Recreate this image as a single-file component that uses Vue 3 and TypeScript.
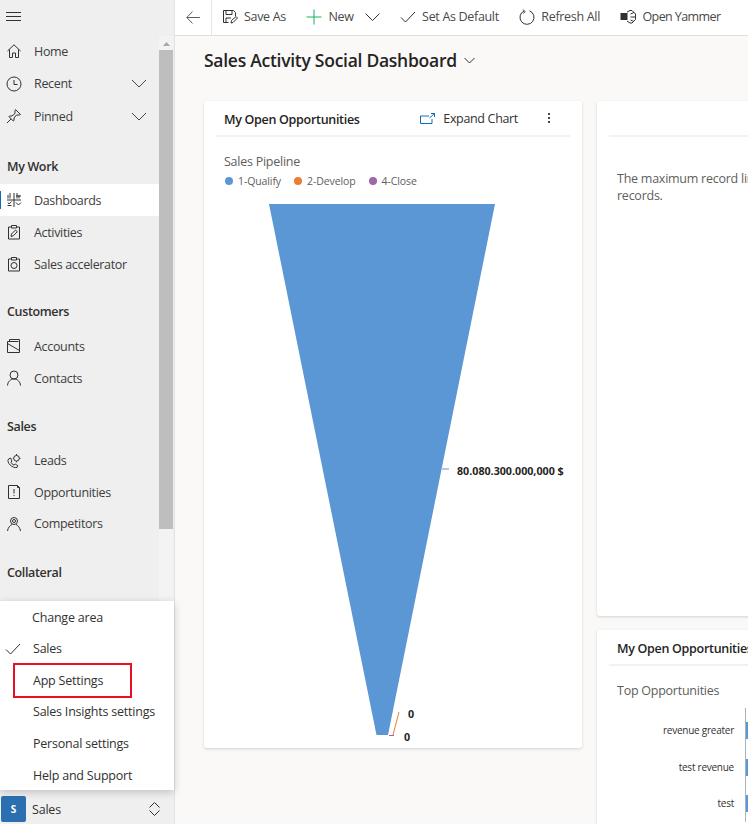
<script setup lang="ts">
interface Item { label: string; icon: string; chevron?: boolean; active?: boolean }
interface Group { title: string; items: Item[] }

const icons: Record<string, string> = {
  home: 'M1.5 8 8 1.8 14.5 8M3.5 6.5V14.5H6.5V10H9.5V14.5H12.5V6.5',
  recent: 'M8 1a7 7 0 1 0 0 14A7 7 0 0 0 8 1ZM8 4V8.5H11.5',
  pin: 'M9.5 1.5 14.5 6.5 13.5 7 10.5 7 8 10 8 12.5 7.3 13 3 8.7 3.5 8 6 8 9 5.5 9 2.5ZM5 11 1 15',
  dash: 'M1 8H15M4 1V6.5M2 3V6.5M8 1V15M11 1V6.5M13 3V6.5M10 4H15M2 10.5 3 12 5.5 9.5M1.5 13.5 5.5 13.5M10 10.5 12.5 13 15 10.5',
  activity: 'M5 3H2.5V15H13.5V3H11M5.5 1.5H10.5V4H5.5ZM5 12.5 5.5 10 9.5 6 11.3 7.7 7.3 11.8Z',
  accel: 'M5 3H2.5V15H13.5V3H11M5.500 1.500H10.500V4H5.500ZM8 6.500A3 3 0 1 0 8 12.500 3 3 0 0 0 8 6.500Z',
  account: 'M1.500 14.500V3.500H12.500M3.500 3.500V1.500H13.500V14.500H1.500M1.500 5.500 13.500 12.500',
  contact: 'M8 1A4 4 0 1 0 8 9 4 4 0 0 0 8 1ZM1.500 15.500C1.800 11.500 4.500 9 8 9S14.200 11.500 14.500 15.500',
  lead: 'M2.500 6 4.500 5 6 8 5 9.200C5.500 10.500 6.500 11.500 8 12L9.200 11 11.800 12.700 11 14.500C6.500 15.500 0 9.500 2.500 6ZM10.500 2.500A2.800 2.800 0 1 0 10.500 8.100 2.800 2.800 0 0 0 10.500 2.500ZM10.500 1V2.500M10.500 8.100V9.300M6.800 5.300H7.700M13.300 5.300H14.500',
  opp: 'M2.500 1.500H11.500L13.500 3.500V14.500H2.500ZM11.500 1.500V3.500H13.500M8 5V9.500M8 11V12',
  competitor: 'M8 1.500A3.500 3.500 0 1 0 8 8.500 3.500 3.500 0 0 0 8 1.500ZM8 3.500A1.500 1.500 0 1 0 8 6.500 1.500 1.500 0 0 0 8 3.500ZM1.500 15C2 11.500 4 9.500 6 8.500M14.500 15C14 11.500 12 9.500 10 8.500',
}

const groups: Group[] = [
  { title: 'My Work', items: [
    { label: 'Dashboards', icon: 'dash', active: true },
    { label: 'Activities', icon: 'activity' },
    { label: 'Sales accelerator', icon: 'accel' },
  ] },
  { title: 'Customers', items: [
    { label: 'Accounts', icon: 'account' },
    { label: 'Contacts', icon: 'contact' },
  ] },
  { title: 'Sales', items: [
    { label: 'Leads', icon: 'lead' },
    { label: 'Opportunities', icon: 'opp' },
    { label: 'Competitors', icon: 'competitor' },
  ] },
]
const topItems: Item[] = [
  { label: 'Home', icon: 'home' },
  { label: 'Recent', icon: 'recent', chevron: true },
  { label: 'Pinned', icon: 'pin', chevron: true },
]
const menu = ['Sales', 'App Settings', 'Sales Insights settings', 'Personal settings', 'Help and Support']
const legend = [
  { label: '1-Qualify', color: '#5b97d5' },
  { label: '2-Develop', color: '#ed7d31' },
  { label: '4-Close', color: '#9e67a5' },
]
const bars = ['revenue greater', 'test revenue', 'test']
</script>

<template>
  <div class="page">
    <aside class="side">
      <div class="side-body">
        <div class="nav">
          <div class="burger"><svg width="15" height="12" viewBox="0 0 15 12"><path d="M0 .5H15M0 4.500H15M0 8.500H15" /></svg></div>
          <div class="top-rows">
            <div v-for="it in topItems" :key="it.label" class="row">
              <svg class="ic" width="16" height="16" viewBox="0 0 16 16"><path :d="icons[it.icon]" /></svg>
              <span class="lbl">{{ it.label }}</span>
              <svg v-if="it.chevron" class="chev" width="16" height="9" viewBox="0 0 16 9"><path d="M1 1 8 8 15 1" /></svg>
            </div>
          </div>
          <section v-for="g in groups" :key="g.title" class="group">
            <h3 class="gt">{{ g.title }}</h3>
            <div v-for="it in g.items" :key="it.label" class="row" :class="{ active: it.active }">
              <svg class="ic" width="16" height="16" viewBox="0 0 16 16"><path :d="icons[it.icon]" /></svg>
              <span class="lbl">{{ it.label }}</span>
            </div>
          </section>
          <section class="group">
            <h3 class="gt">Collateral</h3>
          </section>
        </div>
        <div class="scroll">
          <svg class="arrow" width="7" height="4" viewBox="0 0 7 4"><path class="solid" d="M0 4 3.500 0 7 4Z" /></svg>
          <div class="thumb"></div>
        </div>
      </div>
      <div class="switcher">
        <span class="badge">S</span>
        <span class="sw-label">Sales</span>
        <svg width="11" height="14" viewBox="0 0 11 14" class="updown"><path d="M.5 5.500 5.500 .5 10.500 5.500M.5 8.500 5.500 13.500 10.500 8.500" /></svg>
      </div>
      <div class="menu">
        <div class="menu-head">Change area</div>
        <div v-for="(m, i) in menu" :key="m" class="menu-row">
          <svg v-if="i === 0" class="check" width="16" height="12" viewBox="0 0 16 12"><path d="M1 6.500 5.500 11 15 1" /></svg>
          <span class="menu-text">{{ m }}</span>
        </div>
        <div class="redbox"></div>
      </div>
    </aside>

    <div class="main">
      <header class="bar">
        <div class="back"><svg width="14" height="13" viewBox="0 0 14 13"><path d="M6.500 .5 .8 6.500 6.500 12.500M.8 6.500H14" /></svg></div>
        <div class="tools">
          <div class="tool">
            <svg width="16" height="16" viewBox="0 0 16 16"><path d="M6.500 13.500H1.500V1.500H11.500L13.500 3.500V7M4 1.500V5.500H10V1.500M4 13V9H9M9 14 9.500 11.500 14 7.500 15.500 9 11 13.500Z" /></svg>
            <span>Save As</span>
          </div>
          <div class="tool">
            <svg width="16" height="16" viewBox="0 0 16 16"><path class="green" d="M8 .5V15.500M.5 8H15.500" /></svg>
            <span>New</span>
            <svg class="new-chev" width="15" height="8" viewBox="0 0 15 8"><path d="M.5 .5 7.500 7.500 14.500 .5" /></svg>
          </div>
          <div class="tool">
            <svg width="16" height="12" viewBox="0 0 16 12"><path d="M1 6.500 5.500 11 15 1" /></svg>
            <span>Set As Default</span>
          </div>
          <div class="tool">
            <svg width="16" height="16" viewBox="0 0 16 16"><path d="M10.500 1.800A7 7 0 1 1 5 2M4 .5 6 2.500 4.500 4.500" /></svg>
            <span>Refresh All</span>
          </div>
          <div class="tool">
            <svg width="16" height="14" viewBox="0 0 16 14"><rect x=".5" y="3" width="7" height="7" fill="#323130" stroke="none" /><path d="M7 2 10 .5H12L15.500 4V9.500L12 13H10L7 11M10.500 4 14 2.500M10.500 7H15M10.500 10 14 11.500" /></svg>
            <span>Open Yammer</span>
          </div>
        </div>
      </header>

      <div class="content">
        <div class="title-row">
          <h1>Sales Activity Social Dashboard</h1>
          <svg width="11" height="7" viewBox="0 0 11 7"><path d="M.5 1 5.500 6 10.500 1" /></svg>
        </div>
        <div class="grid">
          <div class="col">
            <article class="card big">
              <div class="card-head">
                <h2>My Open Opportunities</h2>
                <div class="expand">
                  <svg width="15" height="11" viewBox="0 0 15 11"><path d="M9 3H.5V10.500H12V6M9.500 5 14.500 .5M11 .5H14.500V4" /></svg>
                  <span>Expand Chart</span>
                </div>
                <div class="dots"><i></i><i></i><i></i></div>
              </div>
              <div class="chart-title">Sales Pipeline</div>
              <div class="legend">
                <span v-for="l in legend" :key="l.label" class="leg"><i :style="{ background: l.color }"></i>{{ l.label }}</span>
              </div>
              <div class="funnel">
                <svg width="378" height="560" viewBox="204 190 378 560">
                  <polygon points="269,204 495,204 388,735 376.500,735" fill="#5b97d5" />
                  <path class="blue" d="M442 469H449" />
                  <path class="orange" d="M393 735 399 712" />
                  <path class="purple" d="M389 735.500H394" />
                </svg>
                <span class="val v1">80.080.300.000,000 $</span>
                <span class="val v2">0</span>
                <span class="val v3">0</span>
              </div>
            </article>
          </div>
          <div class="col second">
            <article class="card tall">
              <div class="card-head empty"></div>
              <p class="msg">The maximum record limit is exceeded. Reduce the number of records.</p>
            </article>
            <article class="card bottom">
              <div class="card-head"><h2>My Open Opportunities</h2></div>
              <div class="chart-title">Top Opportunities</div>
              <div class="hbars">
                <div v-for="b in bars" :key="b" class="hrow"><span>{{ b }}</span><i></i></div>
              </div>
            </article>
          </div>
        </div>
      </div>
    </div>
  </div>
</template>

<style>
html, body { margin: 0; padding: 0; overflow: hidden; }
</style>

<style scoped>
.page { width: 748px; height: 824px; display: flex; overflow: hidden; font-family: "Open Sans", "Liberation Sans", sans-serif; color: #323130; background: #faf9f8; }
svg { display: block; flex: none; }
svg path { fill: none; stroke: #323130; stroke-width: 1; }

.side { position: relative; width: 174px; flex: none; display: flex; flex-direction: column; background: #efefef; border-right: 1px solid #e3e3e3; }
.side-body { flex: 1; min-height: 0; display: flex; overflow: hidden; }
.nav { width: 159px; flex: none; }
.burger { height: 35px; box-sizing: border-box; padding: 12px 0 0 6px; }
.top-rows .row { height: 32.500px; }
.row { height: 32px; display: flex; align-items: center; padding-left: 6px; padding-right: 12px; position: relative; }
.row.active { background: #fff; }
.row.active::before { content: ""; position: absolute; left: 0; top: 7px; bottom: 7px; width: 1px; background: #0f6cbd; }
.ic { margin-right: 12px; }
.lbl { font-size: 12.500px; letter-spacing: -0.33px; color: #3e3d3c; flex: 1; white-space: nowrap; }
.chev path { stroke: #484644; }
.group { margin-top: 16px; }
.group:nth-of-type(1) { margin-top: 18.500px; }
.group:nth-of-type(3) { margin-top: 17px; }
.group:nth-of-type(3) .row { height: 31.500px; }
.group:nth-of-type(4) { margin-top: 17.500px; }
.gt { margin: 0 0 2px; height: 32px; line-height: 32px; padding-left: 7px; font-size: 12.500px; font-weight: 600; letter-spacing: -0.35px; color: #323130; }
.group:nth-of-type(1) .gt { margin-bottom: 1px; }
.scroll { width: 14px; flex: none; position: relative; margin-top: 36px; display: flex; flex-direction: column; align-items: center; background: #f3f3f3; }
.arrow { margin-top: 6px; }
.arrow .solid { fill: #a6a6a6; stroke: none; }
.thumb { position: absolute; top: 14px; left: 0; width: 14px; height: 479px; background: #bebebe; }

.switcher { height: 34px; flex: none; box-sizing: border-box; display: flex; align-items: center; background: #efefef; padding: 4px 0 0 1px; }
.badge { width: 25px; height: 26px; border-radius: 2px; background: #2b6fb0; color: #fff; font-size: 10px; font-weight: 700; display: flex; align-items: center; justify-content: center; }
.sw-label { margin-left: 6px; font-size: 12.500px; flex: 1; letter-spacing: -0.2px; }
.updown { margin-right: 14px; }

.menu { position: absolute; left: 0; bottom: 34px; width: 174px; height: 189px; box-sizing: border-box; background: #fff; box-shadow: 0 2px 8px rgba(0, 0, 0, .2); }
.menu-head { height: 32px; line-height: 33px; padding-left: 32px; font-size: 12.500px; letter-spacing: -0.2px; color: #323130; }
.menu-row { height: 31.600px; display: flex; align-items: center; position: relative; padding-left: 33px; font-size: 12.500px; letter-spacing: -0.22px; white-space: nowrap; }
.check { position: absolute; left: 5px; top: 10px; }
.redbox { position: absolute; left: 13px; top: 62px; width: 115px; height: 31px; border: 2px solid #e81123; }

.main { flex: 1; min-width: 0; display: flex; flex-direction: column; }
.bar { height: 36px; flex: none; box-sizing: border-box; background: #fff; border-bottom: 1px solid #e1dfdd; display: flex; align-items: center; }
.back { width: 37px; height: 35px; flex: none; box-sizing: border-box; display: flex; align-items: center; justify-content: center; border-right: 1px solid #e6e6e6; }
.back path { stroke: #605e5c; }
.tools { display: flex; align-items: center; gap: 20.500px; padding: 0 0 2px 10px; }
.tool { display: flex; align-items: center; gap: 6px; font-size: 12.500px; letter-spacing: -0.32px; color: #4a4947; white-space: nowrap; }
.tool:last-child { letter-spacing: -0.6px; }
.tool svg path.green { stroke: #1fae5a; }
.new-chev { margin-left: 5px; }

.content { flex: 1; min-height: 0; padding: 0 0 0 29px; overflow: hidden; }
.title-row { height: 48px; display: flex; align-items: center; gap: 7px; }
h1 { margin: 0; font-size: 17.500px; font-weight: 600; letter-spacing: -0.27px; color: #252423; white-space: nowrap; }
.grid { display: flex; gap: 15px; margin-top: 17px; }
.col { width: 378px; flex: none; display: flex; flex-direction: column; gap: 14px; }
.second { width: 160px; }
.card { width: 378px; background: #fff; border-radius: 3px; box-shadow: 0 1px 3px rgba(0, 0, 0, .16); box-sizing: border-box; }
.big { height: 647px; }
.tall { height: 515px; }
.bottom { height: 260px; }
.card-head { height: 36px; box-sizing: border-box; margin: 0 12px; padding: 0 8px; display: flex; align-items: center; border-bottom: 2px solid #f3f2f1; }
h2 { margin: 2px 0 0; font-size: 12.500px; font-weight: 600; color: #252423; flex: 1; white-space: nowrap; letter-spacing: -0.3px; }
.expand { display: flex; align-items: center; gap: 8px; font-size: 12.500px; letter-spacing: -0.33px; color: #323130; margin-right: 30px; white-space: nowrap; }
.expand path { stroke: #0f6cbd; }
.dots { display: flex; flex-direction: column; gap: 2px; margin-right: 12px; }
.dots i { width: 2px; height: 2px; background: #484644; display: block; }
.chart-title { margin: 16px 0 0 20px; font-size: 12.500px; letter-spacing: -0.25px; color: #605e5c; white-space: nowrap; line-height: 17px; }
.legend { display: flex; gap: 13px; margin: 4px 0 0 21px; font-size: 10.500px; color: #605e5c; letter-spacing: -0.1px; }
.leg { display: flex; align-items: center; gap: 5px; white-space: nowrap; }
.leg i { width: 8px; height: 8px; border-radius: 50%; display: block; }
.funnel { position: relative; height: 560px; margin-top: 2px; }
.funnel .blue { stroke: #5b97d5; }
.funnel .orange { stroke: #ed7d31; }
.funnel .purple { stroke: #9e67a5; }
.val { position: absolute; font-size: 10.700px; font-weight: 700; color: #252423; white-space: nowrap; line-height: 14px; }
.v1 { left: 253px; top: 274px; }
.v2 { left: 204px; top: 517px; }
.v3 { left: 200px; top: 540px; }
.msg { margin: 33px 0 0 20px; width: 350px; font-size: 12.500px; letter-spacing: -0.25px; line-height: 17px; color: #605e5c; }
.bottom .chart-title { margin-top: 16px; }
.hbars { margin-top: 13px; position: relative; }
.hbars::after { content: ""; position: absolute; left: 148px; top: -4px; bottom: 0; width: 1px; background: #a6b3c0; }
.hrow { height: 36.500px; display: flex; align-items: center; justify-content: flex-end; width: 148px; position: relative; font-size: 10px; letter-spacing: -0.25px; color: #323130; white-space: nowrap; }
.hrow span { margin-right: 11px; }
.hrow i { position: absolute; left: 149px; top: 10px; width: 4px; height: 17px; background: #5b97d5; }
</style>
